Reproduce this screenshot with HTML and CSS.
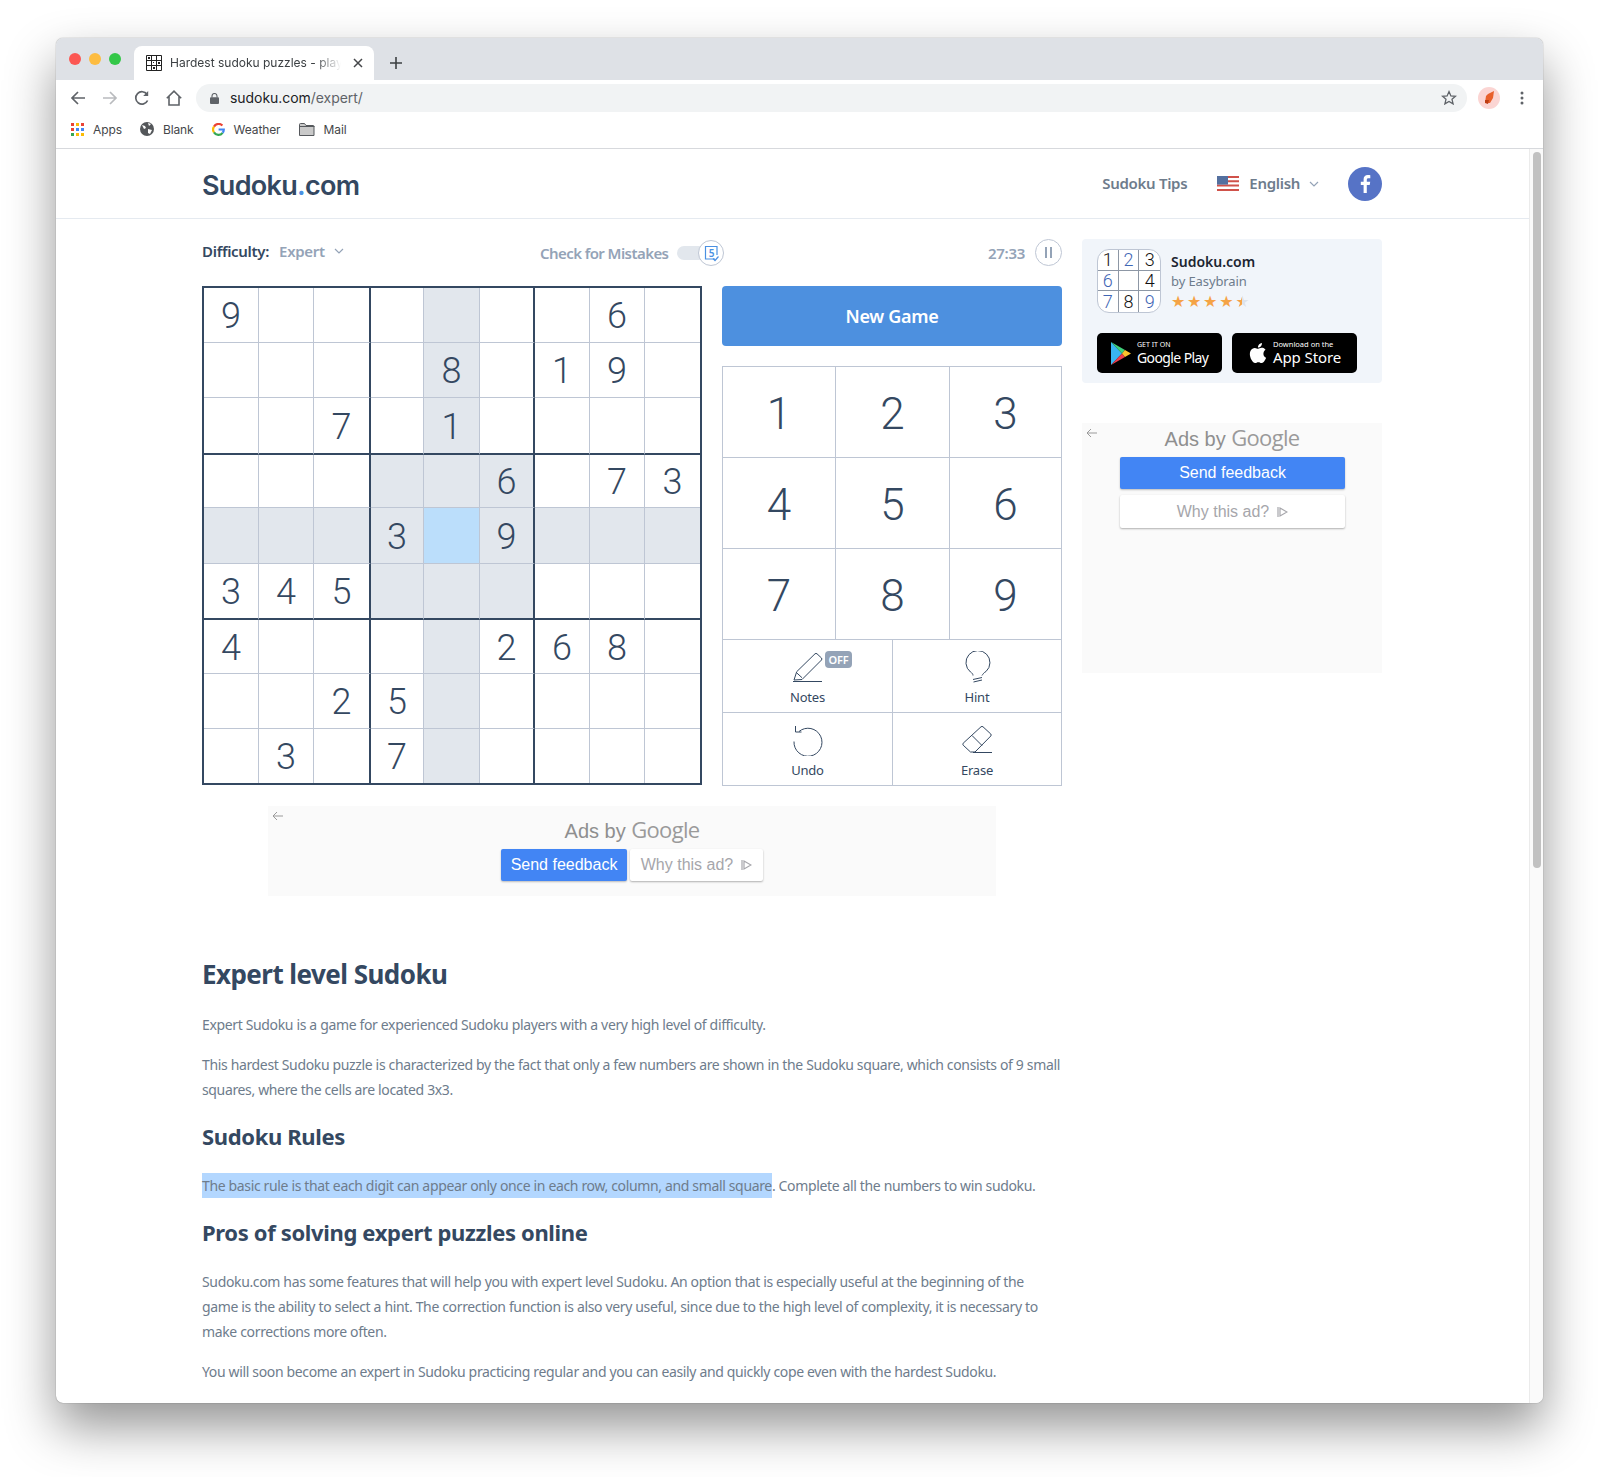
FILE: index.html
```html
<!DOCTYPE html>
<html lang="en">

<head>
    <meta charset="UTF-8">
    <title>Hardest sudoku puzzles - play online</title>
    <link rel="stylesheet" href="styles.css">
</head>

<body>
    <div class="window">
        <!-- browser chrome -->
        <div class="tabstrip">
            <div class="lights">
                <span class="light red"></span>
                <span class="light yellow"></span>
                <span class="light green"></span>
            </div>
            <div class="tab">
                <svg class="favicon" width="16" height="16" viewBox="0 0 16 16" fill="none" stroke="#222" stroke-width="1">
                    <path d="M.5.5h15v15H.5zM5.5.5v15M10.5.5v15M.5 5.5h15M.5 10.5h15" />
                    <path d="M2 2h2v2H2zM12 7h2v2h-2zM7 12h2v2H7zM7 7h1v1H7z" fill="#222" stroke="none" />
                </svg>
                <span class="tab-title">Hardest sudoku puzzles - play online</span>
                <svg class="tab-close" width="10" height="10" viewBox="0 0 10 10" stroke="#45474a" stroke-width="1.5">
                    <path d="M1 1l8 8M9 1l-8 8" />
                </svg>
            </div>
            <svg class="tab-new" width="12" height="12" viewBox="0 0 12 12" stroke="#3c4043" stroke-width="1.6">
                <path d="M6 0v12M0 6h12" />
            </svg>
        </div>

        <div class="toolbar">
            <svg class="nav-icon" width="16" height="16" viewBox="0 0 16 16" fill="none" stroke="#5f6368" stroke-width="1.7">
                <path d="M15 8H2M8 2L2 8l6 6" />
            </svg>
            <svg class="nav-icon" width="16" height="16" viewBox="0 0 16 16" fill="none" stroke="#b9bbbe" stroke-width="1.7">
                <path d="M1 8h13M8 2l6 6-6 6" />
            </svg>
            <svg class="nav-icon" width="16" height="16" viewBox="0 0 16 16" fill="none" stroke="#5f6368" stroke-width="1.7">
                <path d="M13.6 10.5A6.2 6.2 0 1 1 13 4.3" />
                <path d="M14.2 1v5h-5z" fill="#5f6368" stroke="none" />
            </svg>
            <svg class="nav-icon" width="16" height="16" viewBox="0 0 16 16" fill="none" stroke="#5f6368" stroke-width="1.6">
                <path d="M.8 8.2L8 1.2l7.2 7M3 6.5V15h10V6.5" />
            </svg>
            <div class="omnibox">
                <svg width="9" height="11" viewBox="0 0 9 11">
                    <path d="M2 4.5V3a2.5 2.5 0 0 1 5 0v1.5" fill="none" stroke="#5f6368" stroke-width="1.1" />
                    <rect y="4.2" width="9" height="6.8" rx="1" fill="#5f6368" />
                </svg>
                <span class="url">sudoku.com<span class="url-path">/expert/</span></span>
                <svg class="star-btn" width="16" height="16" viewBox="0 0 16 16" fill="none" stroke="#5f6368" stroke-width="1.3">
                    <path d="M8 1.6l1.9 4.3 4.6.4-3.5 3 1.1 4.6L8 11.4l-4.1 2.5L5 9.3l-3.5-3 4.6-.4z" />
                </svg>
            </div>
            <svg class="avatar" width="22" height="22" viewBox="0 0 22 22">
                <circle cx="11" cy="11" r="11" fill="#fbd5d3" />
                <path d="M8 9l2-2 6-3-1 7-3 5-5 0z" fill="#e8602c" />
                <path d="M7 13l4 0-1 4-3-1z" fill="#bd3c12" />
            </svg>
            <svg class="kebab" width="4" height="14" viewBox="0 0 4 14" fill="#5f6368">
                <circle cx="2" cy="2" r="1.5" />
                <circle cx="2" cy="7" r="1.5" />
                <circle cx="2" cy="12" r="1.5" />
            </svg>
        </div>

        <div class="bookmarks">
            <div class="bookmark apps">
                <svg width="13" height="13" viewBox="0 0 13 13">
                    <path d="M0 0h3v3H0z" fill="#ea4335" /><path d="M5 0h3v3H5z" fill="#fbbc05" /><path d="M10 0h3v3h-3z" fill="#ea4335" />
                    <path d="M0 5h3v3H0z" fill="#ea4335" /><path d="M5 5h3v3H5z" fill="#4285f4" /><path d="M10 5h3v3h-3z" fill="#4285f4" />
                    <path d="M0 10h3v3H0z" fill="#34a853" /><path d="M5 10h3v3H5z" fill="#fbbc05" /><path d="M10 10h3v3h-3z" fill="#fbbc05" />
                </svg>
                Apps
            </div>
            <div class="bookmark blank">
                <svg width="14" height="14" viewBox="0 0 14 14">
                    <circle cx="7" cy="7" r="7" fill="#54575a" />
                    <path d="M2 3l3 1 1 2-2 1zM8 1l3 1-2 2zM8 7l4 1-2 4-2-1z" fill="#fff" />
                </svg>
                Blank
            </div>
            <div class="bookmark weather">
                <svg width="13" height="13" viewBox="0 0 13 13" fill="none" stroke-width="2.2">
                    <path d="M10.4 2.6A5.2 5.2 0 0 0 2 3.6" stroke="#ea4335" />
                    <path d="M2 3.6a5.2 5.2 0 0 0 0 5.8" stroke="#fbbc05" />
                    <path d="M2 9.4a5.2 5.2 0 0 0 8.6.4" stroke="#34a853" />
                    <path d="M10.6 9.8a5.2 5.2 0 0 0 1.2-3.3H6.6" stroke="#4285f4" />
                </svg>
                Weather
            </div>
            <div class="bookmark">
                <svg width="16" height="13" viewBox="0 0 16 13">
                    <path d="M.5 12.5V1.5a1 1 0 0 1 1-1h4l1.5 2h7a1 1 0 0 1 1 1v9z" fill="#c9c9c9" stroke="#55585c" />
                    <path d="M.5 3.5h15" stroke="#55585c" />
                </svg>
                Mail
            </div>
        </div>

        <!-- page -->
        <div class="page">
            <div class="page-main">
                <header class="site-header">
                    <div class="logo">Sudoku<span class="logo-dot">.</span>com</div>
                    <nav class="site-nav">
                        <a class="nav-link">Sudoku Tips</a>
                        <div class="lang">
                            <svg width="22" height="15" viewBox="0 0 22 15">
                                <rect width="22" height="15" fill="#fff" />
                                <path d="M0 0h22v2H0zM0 4.3h22v2H0zM0 8.6h22v2H0zM0 13h22v2H0z" fill="#d0524a" />
                                <rect width="11" height="8.6" fill="#54709f" />
                            </svg>
                            <span>English</span>
                            <svg class="chev" width="10" height="6" viewBox="0 0 10 6" fill="none" stroke="#94a3b7" stroke-width="1.2">
                                <path d="M1 1l4 4 4-4" />
                            </svg>
                        </div>
                        <div class="fb">
                            <svg width="34" height="34" viewBox="0 0 34 34">
                                <path d="M18.8 26v-8h2.9l.5-3.3h-3.4v-1.9c0-1 .4-1.6 1.7-1.6h1.8V8.200c-.5-.1-1.400-.2-2.500-.2-2.700 0-4.200 1.600-4.200 4.300v2.400h-2.800V18h2.800v8z" fill="#fff" />
                            </svg>
                        </div>
                    </nav>
                </header>

                <div class="content">
                    <main class="game-col">
                        <div class="game-top">
                            <div class="difficulty">
                                <b>Difficulty:</b>
                                <span>Expert</span>
                                <svg width="10" height="6" viewBox="0 0 10 6" fill="none" stroke="#94a3b7" stroke-width="1.2">
                                    <path d="M1 1l4 4 4-4" />
                                </svg>
                            </div>
                            <div class="mistakes">
                                <span>Check for Mistakes</span>
                                <div class="toggle">
                                    <div class="toggle-knob">
                                        <svg width="18" height="18" viewBox="0 0 18 18" fill="none" stroke="#4a90e2" stroke-width="1.2">
                                            <path d="M13 15H3.5V2.5H15V11" />
                                            <path d="M11 14.5l2 2 3.5-4" />
                                        </svg>
                                        <span class="knob-num">5</span>
                                    </div>
                                </div>
                            </div>
                            <div class="timer">
                                <span>27:33</span>
                                <div class="pause"><i></i><i></i></div>
                            </div>
                        </div>

                        <div class="game">
                            <div class="board">
                                <div class="cell">9</div><div class="cell"></div><div class="cell"></div><div class="cell"></div><div class="cell hl"></div><div class="cell"></div><div class="cell"></div><div class="cell">6</div><div class="cell"></div>
                                <div class="cell"></div><div class="cell"></div><div class="cell"></div><div class="cell"></div><div class="cell hl">8</div><div class="cell"></div><div class="cell">1</div><div class="cell">9</div><div class="cell"></div>
                                <div class="cell"></div><div class="cell"></div><div class="cell">7</div><div class="cell"></div><div class="cell hl">1</div><div class="cell"></div><div class="cell"></div><div class="cell"></div><div class="cell"></div>
                                <div class="cell"></div><div class="cell"></div><div class="cell"></div><div class="cell hl"></div><div class="cell hl"></div><div class="cell hl">6</div><div class="cell"></div><div class="cell">7</div><div class="cell">3</div>
                                <div class="cell hl"></div><div class="cell hl"></div><div class="cell hl"></div><div class="cell hl">3</div><div class="cell sel"></div><div class="cell hl">9</div><div class="cell hl"></div><div class="cell hl"></div><div class="cell hl"></div>
                                <div class="cell">3</div><div class="cell">4</div><div class="cell">5</div><div class="cell hl"></div><div class="cell hl"></div><div class="cell hl"></div><div class="cell"></div><div class="cell"></div><div class="cell"></div>
                                <div class="cell">4</div><div class="cell"></div><div class="cell"></div><div class="cell"></div><div class="cell hl"></div><div class="cell">2</div><div class="cell">6</div><div class="cell">8</div><div class="cell"></div>
                                <div class="cell"></div><div class="cell"></div><div class="cell">2</div><div class="cell">5</div><div class="cell hl"></div><div class="cell"></div><div class="cell"></div><div class="cell"></div><div class="cell"></div>
                                <div class="cell"></div><div class="cell">3</div><div class="cell"></div><div class="cell">7</div><div class="cell hl"></div><div class="cell"></div><div class="cell"></div><div class="cell"></div><div class="cell"></div>
                            </div>

                            <div class="controls">
                                <button class="new-game">New Game</button>
                                <div class="numpad">
                                    <div class="num">1</div><div class="num">2</div><div class="num">3</div>
                                    <div class="num">4</div><div class="num">5</div><div class="num">6</div>
                                    <div class="num">7</div><div class="num">8</div><div class="num">9</div>
                                </div>
                                <div class="actions">
                                    <div class="action">
                                        <span class="action-icon">
                                            <svg width="31" height="31" viewBox="0 0 31 31" fill="none" stroke="#344861" stroke-width="1">
                                                <path d="M2 28l2.7-8.300L23 1.800q1-.8 2 0L29.500 6q.8 1 0 2L10 27.500z" />
                                                <path d="M4.500 20.700l5.500 5M1 29.500h29" />
                                            </svg>
                                            <span class="off">OFF</span>
                                        </span>
                                        Notes
                                    </div>
                                    <div class="action">
                                        <svg width="31" height="32" viewBox="0 0 31 32" fill="none" stroke="#344861" stroke-width="1">
                                            <path d="M11 24.500c0-1.500-1-2.500-2.500-3.500A12 12 0 1 1 24 20.500c-2 1-3 2.500-4 4" />
                                            <path d="M11 28.500l9-2M11.500 31l8.500-2" />
                                        </svg>
                                        Hint
                                    </div>
                                    <div class="action">
                                        <svg width="31" height="31" viewBox="0 0 31 31" fill="none" stroke="#344861" stroke-width="1">
                                            <path d="M7 6.500A14 14 0 1 1 2 16.500" />
                                            <path d="M3.500 1v6h6" />
                                        </svg>
                                        Undo
                                    </div>
                                    <div class="action">
                                        <svg width="31" height="31" viewBox="0 0 31 31" fill="none" stroke="#344861" stroke-width="1">
                                            <path d="M19 1.800q1-.8 2 0l7.800 7.200q.8 1 0 2L13 27H8.500L1.200 20.200q-.8-1 0-2z" />
                                            <path d="M10 10.500l10 10M11 27.500h19" />
                                        </svg>
                                        Erase
                                    </div>
                                </div>
                            </div>
                        </div>

                        <div class="ad ad-wide">
                            <svg class="ad-back" width="11" height="10" viewBox="0 0 11 10" fill="none" stroke="#9a9a9a">
                                <path d="M11 5H1M5 1L1 5l4 4" />
                            </svg>
                            <div class="ad-title">Ads by <span class="ad-google">Google</span></div>
                            <div class="ad-btns">
                                <div class="ad-send">Send feedback</div>
                                <div class="ad-why">Why this ad?
                                    <svg width="11" height="12" viewBox="0 0 11 12" fill="none" stroke="#a6a6ab" stroke-width="1.2">
                                        <path d="M1 1v10M3 2l7 4-7 4z" />
                                    </svg>
                                </div>
                            </div>
                        </div>

                        <section class="article">
                            <h2>Expert level Sudoku</h2>
                            <p class="p-first">Expert Sudoku is a game for experienced Sudoku players with a very high level of difficulty.</p>
                            <p>This hardest Sudoku puzzle is characterized by the fact that only a few numbers are shown in the Sudoku square, which consists of 9 small squares, where the cells are located 3x3.</p>
                            <h3>Sudoku Rules</h3>
                            <p><span class="selected">The basic rule is that each digit can appear only once in each row, column, and small square</span>. Complete all the numbers to win sudoku.</p>
                            <h3>Pros of solving expert puzzles online</h3>
                            <p>Sudoku.com has some features that will help you with expert level Sudoku. An option that is especially useful at the beginning of the game is the ability to select a hint. The correction function is also very useful, since due to the high level of complexity, it is necessary to make corrections more often.</p>
                            <p>You will soon become an expert in Sudoku practicing regular and you can easily and quickly cope even with the hardest Sudoku.</p>
                        </section>
                    </main>

                    <aside class="side-col">
                        <div class="app-box">
                            <div class="app-info">
                                <div class="app-icon">
                                    <span>1</span><span class="blue">2</span><span>3</span>
                                    <span class="blue">6</span><span></span><span>4</span>
                                    <span class="blue">7</span><span>8</span><span class="blue">9</span>
                                </div>
                                <div class="app-text">
                                    <div class="app-name">Sudoku.com</div>
                                    <div class="app-by">by Easybrain</div>
                                    <div class="stars">★★★★<span class="half">★</span></div>
                                </div>
                            </div>
                            <div class="stores">
                                <div class="store">
                                    <svg width="20" height="23" viewBox="0 0 20 23">
                                        <path d="M0 0v23l11-11.500z" fill="#38b6f1" />
                                        <path d="M0 0l14 8-3 3.500z" fill="#3fd07a" />
                                        <path d="M0 23l14-8-3-3.500z" fill="#ee3f4d" />
                                        <path d="M14 8l6 3.500-6 3.500-3-3.500z" fill="#fcc22d" />
                                    </svg>
                                    <div class="store-text">
                                        <small>GET IT ON</small>
                                        <strong>Google Play</strong>
                                    </div>
                                </div>
                                <div class="store store-apple">
                                    <svg width="24" height="26" viewBox="0 0 24 24" fill="#fff">
                                        <path d="M18.71 19.5c-.83 1.24-1.71 2.45-3.05 2.47-1.34.03-1.77-.79-3.29-.79-1.53 0-2 .77-3.27.82-1.31.05-2.3-1.32-3.14-2.53C4.25 17 2.94 12.45 4.7 9.39c.87-1.52 2.43-2.48 4.12-2.51 1.28-.02 2.5.87 3.29.87.78 0 2.26-1.07 3.81-.91.65.03 2.47.26 3.64 1.98-.09.06-2.17 1.28-2.15 3.81.03 3.02 2.65 4.03 2.68 4.04-.03.07-.42 1.44-1.38 2.83M13 3.5c.73-.83 1.94-1.46 2.94-1.5.13 1.17-.34 2.35-1.04 3.19-.69.85-1.83 1.51-2.95 1.42-.15-1.15.41-2.35 1.05-3.11z" />
                                    </svg>
                                    <div class="store-text">
                                        <small class="apple-small">Download on the</small>
                                        <strong class="apple-strong">App Store</strong>
                                    </div>
                                </div>
                            </div>
                        </div>

                        <div class="ad ad-tall">
                            <svg class="ad-back" width="11" height="10" viewBox="0 0 11 10" fill="none" stroke="#9a9a9a">
                                <path d="M11 5H1M5 1L1 5l4 4" />
                            </svg>
                            <div class="ad-title">Ads by <span class="ad-google">Google</span></div>
                            <div class="ad-send">Send feedback</div>
                            <div class="ad-why">Why this ad?
                                <svg width="11" height="12" viewBox="0 0 11 12" fill="none" stroke="#a6a6ab" stroke-width="1.2">
                                    <path d="M1 1v10M3 2l7 4-7 4z" />
                                </svg>
                            </div>
                        </div>
                    </aside>
                </div>
            </div>

            <div class="scrollbar">
                <div class="scroll-thumb"></div>
            </div>
        </div>
    </div>
</body>

</html>
```

FILE: styles.css
```css
html,
body {
    margin: 0;
    padding: 0;
    background-color: #fff;
}

body {
    height: 1477px;
    overflow: hidden;
    font-family: "Noto Sans", Arial, sans-serif;
    color: #344861;
}

/* browser window */
.window {
    display: flex;
    flex-direction: column;
    width: 1487px;
    height: 1365px;
    margin: 38px 0 0 56px;
    background-color: #fff;
    border-radius: 7px;
    overflow: hidden;
    box-shadow: 0 0 1px rgba(0, 0, 0, 0.6), 0 24px 50px rgba(0, 0, 0, 0.42);
}

.tabstrip {
    display: flex;
    align-items: flex-end;
    flex: none;
    height: 42px;
    padding-left: 13px;
    background-color: #dee1e6;
    font-family: Inter, Arial, sans-serif;
}

.lights {
    display: flex;
    gap: 8px;
    width: 65px;
    align-self: flex-start;
    padding-top: 15px;
}

.light {
    width: 12px;
    height: 12px;
    border-radius: 50%;
}

.red { background-color: #fc5753; }
.yellow { background-color: #fdbc40; }
.green { background-color: #33c748; }

.tab {
    display: flex;
    align-items: center;
    width: 240px;
    height: 34px;
    padding-left: 12px;
    box-sizing: border-box;
    background-color: #fff;
    border-radius: 8px 8px 0 0;
}

.favicon {
    flex: none;
}

.tab-title {
    width: 171px;
    margin: -2px 0 0 8px;
    overflow: hidden;
    white-space: nowrap;
    font-size: 12px;
    color: #3c4043;
    -webkit-mask-image: linear-gradient(to right, #000 85%, transparent);
    mask-image: linear-gradient(to right, #000 85%, transparent);
}

.tab-close {
    margin-left: 12px;
}

.tab-new {
    margin: 0 0 11px 16px;
}

.toolbar {
    display: flex;
    align-items: center;
    flex: none;
    height: 36px;
    padding: 0 19px 0 14px;
    font-family: Inter, Arial, sans-serif;
}

.nav-icon {
    flex: none;
    margin-right: 16px;
}

.omnibox {
    display: flex;
    align-items: center;
    flex: 1;
    height: 28px;
    margin-left: -2px;
    padding: 0 10px 0 14px;
    border-radius: 14px;
    background-color: #f1f3f4;
}

.url {
    margin: -2px 0 0 11px;
    font-size: 14px;
    letter-spacing: -0.05px;
    color: #202124;
}

.url-path {
    color: #5f6368;
}

.star-btn {
    margin-left: auto;
}

.avatar {
    flex: none;
    margin-left: 11px;
}

.kebab {
    flex: none;
    margin-left: 20px;
}

.bookmarks {
    display: flex;
    align-items: center;
    gap: 18px;
    flex: none;
    height: 33px;
    padding: 0 0 6px 15px;
    box-sizing: border-box;
    border-bottom: 1px solid #d7d9dd;
    font-family: Inter, Arial, sans-serif;
    font-size: 12px;
    letter-spacing: -0.1px;
    color: #45474a;
}

.bookmark {
    display: flex;
    align-items: center;
    gap: 9px;
}

.page {
    display: flex;
    flex: 1;
    min-height: 0;
}

.page-main {
    flex: 1;
    min-width: 0;
    overflow: hidden;
}

.scrollbar {
    flex: none;
    width: 14px;
    padding: 3px 2px 0 3px;
    box-sizing: border-box;
    background-color: #fafafa;
    border-left: 1px solid #ebebeb;
}

.scroll-thumb {
    height: 716px;
    border-radius: 4px;
    background-color: #c1c1c1;
}

/* site header */
.site-header {
    display: flex;
    align-items: center;
    justify-content: space-between;
    height: 70px;
    padding: 0 147px 0 146px;
    box-sizing: border-box;
    border-bottom: 1px solid #e5eaf0;
}

.logo {
    font-family: Inter, Arial, sans-serif;
    font-size: 27px;
    font-weight: 600;
    letter-spacing: -0.7px;
    color: #344861;
    margin-top: 4px;
}

.logo-dot {
    color: #4a90e2;
}

.site-nav {
    display: flex;
    align-items: center;
    font-size: 15px;
    font-weight: 600;
    letter-spacing: -0.3px;
    color: #6e7c8c;
}

.nav-link {
    margin: -2px 30px 0 0;
}

.lang {
    display: flex;
    align-items: center;
    gap: 10px;
}

.lang span {
    margin-top: -2px;
}

.lang .chev {
    margin-left: -1px;
}

.fb {
    width: 34px;
    height: 34px;
    margin-left: 29px;
    border-radius: 50%;
    background-color: #5673c6;
}

/* main layout */
.content {
    display: flex;
    gap: 20px;
    padding-left: 146px;
}

.game-col {
    width: 860px;
    flex: none;
}

.side-col {
    width: 300px;
    flex: none;
    padding-top: 20px;
}

.game-top {
    display: flex;
    align-items: center;
    height: 67px;
    font-size: 15px;
    font-weight: 600;
    letter-spacing: -0.3px;
    color: #94a3b7;
}

.difficulty {
    display: flex;
    align-items: center;
    gap: 10px;
    width: 338px;
    margin-top: -3px;
}

.difficulty b {
    font-weight: 600;
    color: #344861;
}

.difficulty svg {
    margin-left: -1px;
}

.mistakes {
    display: flex;
    align-items: center;
    gap: 9px;
    width: 321px;
    letter-spacing: -0.58px;
}

.toggle {
    position: relative;
    width: 34px;
    height: 14px;
    border-radius: 7px;
    background-color: #e2e7ed;
}

.toggle-knob {
    position: absolute;
    top: -6px;
    left: 21px;
    display: flex;
    align-items: center;
    justify-content: center;
    width: 26px;
    height: 26px;
    box-sizing: border-box;
    border: 1px solid #bec6d4;
    border-radius: 50%;
    background-color: #fff;
}

.knob-num {
    position: absolute;
    font-size: 10px;
    font-weight: 600;
    color: #4a90e2;
}

.timer {
    display: flex;
    align-items: center;
    justify-content: flex-end;
    gap: 10px;
    flex: 1;
}

.pause {
    display: flex;
    align-items: center;
    justify-content: center;
    gap: 3px;
    width: 27px;
    height: 27px;
    box-sizing: border-box;
    border: 1px solid #bec6d4;
    border-radius: 50%;
}

.pause i {
    width: 2px;
    height: 11px;
    background-color: #94a3b7;
}

.game {
    display: flex;
    gap: 20px;
}

/* board */
.board {
    display: grid;
    grid-template-columns: 55px 55px 57px 53px 56px 55px 55px 55px 55px;
    grid-template-rows: 55px 55px 57px 53px 56px 56px 54px 55px 54px;
    width: 500px;
    height: 499px;
    box-sizing: border-box;
    border: 2px solid #344861;
    font-family: Roboto, Arial, sans-serif;
    font-weight: 300;
    font-size: 36px;
}

.cell {
    display: flex;
    align-items: center;
    justify-content: center;
    padding-top: 2px;
    box-sizing: border-box;
    border-right: 1px solid #bec6d4;
    border-bottom: 1px solid #bec6d4;
}

.cell:nth-child(9n) {
    border-right: none;
}

.cell:nth-child(9n+3),
.cell:nth-child(9n+6) {
    border-right: 2px solid #344861;
}

.cell:nth-child(n+19):nth-child(-n+27),
.cell:nth-child(n+46):nth-child(-n+54) {
    border-bottom: 2px solid #344861;
}

.cell:nth-child(n+73) {
    border-bottom: none;
}

.hl {
    background-color: #e2e7ed;
}

.sel {
    background-color: #bbdefb;
}

/* right of the board */
.controls {
    width: 340px;
    flex: none;
}

.new-game {
    display: block;
    width: 100%;
    height: 60px;
    padding: 0;
    border: none;
    border-radius: 4px;
    background-color: #4d90df;
    color: #fff;
    font-family: inherit;
    font-size: 18px;
    font-weight: 600;
    letter-spacing: -0.3px;
}

.numpad {
    display: grid;
    grid-template-columns: 113px 114px 111px;
    grid-template-rows: 91px 91px 90px;
    height: 273px;
    margin-top: 20px;
    box-sizing: border-box;
    border: 1px solid #bec6d4;
    border-bottom: none;
    font-family: Roboto, Arial, sans-serif;
    font-weight: 300;
    font-size: 44px;
}

.num {
    display: flex;
    align-items: center;
    justify-content: center;
    padding-top: 3px;
    box-sizing: border-box;
    border-right: 1px solid #bec6d4;
    border-bottom: 1px solid #bec6d4;
}

.num:nth-child(3n) {
    border-right: none;
}

.num:nth-child(n+7) {
    border-bottom: none;
}

.actions {
    display: grid;
    grid-template-columns: 170px 168px;
    grid-template-rows: 73px 72px;
    height: 147px;
    box-sizing: border-box;
    border: 1px solid #bec6d4;
    font-size: 13px;
    letter-spacing: -0.2px;
}

.action {
    display: flex;
    flex-direction: column;
    align-items: center;
    justify-content: flex-end;
    gap: 5px;
    padding-bottom: 6px;
    box-sizing: border-box;
    border-right: 1px solid #bec6d4;
    border-bottom: 1px solid #bec6d4;
}

.action:nth-child(2n) {
    border-right: none;
}

.action:nth-child(n+3) {
    border-bottom: none;
}

.action-icon {
    position: relative;
    display: block;
    height: 31px;
}

.off {
    position: absolute;
    top: -1px;
    left: 33px;
    display: flex;
    align-items: center;
    justify-content: center;
    width: 27px;
    height: 17px;
    border-radius: 4px;
    background-color: #94a3b7;
    color: #fff;
    font-size: 11px;
    font-weight: 600;
}

/* ads */
.ad {
    position: relative;
    background-color: #fafafa;
    font-family: "Liberation Sans", Arial, sans-serif;
    text-align: center;
}

.ad-back {
    position: absolute;
    top: 5px;
    left: 4px;
}

.ad-wide {
    width: 728px;
    height: 90px;
    margin: 20px 0 0 66px;
}

.ad-tall {
    height: 250px;
    margin-top: 40px;
    padding-top: 1px;
    box-sizing: border-box;
}

.ad-title {
    height: 33px;
    line-height: 26px;
    font-size: 20px;
    color: #8f8f8f;
}

.ad-wide .ad-title {
    height: 43px;
    line-height: 46px;
}

.ad-google {
    font-family: "Open Sans", Arial, sans-serif;
    font-size: 22px;
    font-weight: 500;
    letter-spacing: -0.7px;
    color: #9a9a9a;
}

.ad-btns {
    display: flex;
    justify-content: center;
    gap: 3px;
}

.ad-send {
    width: 126px;
    height: 32px;
    line-height: 32px;
    border-radius: 2px;
    background-color: #4285f4;
    color: #fff;
    font-size: 16px;
    box-shadow: 0 1px 2px rgba(0, 0, 0, 0.25);
}

.ad-why {
    display: flex;
    align-items: center;
    justify-content: center;
    gap: 8px;
    width: 133px;
    height: 32px;
    border-radius: 2px;
    background-color: #fff;
    color: #a6a6ab;
    font-size: 16px;
    box-shadow: 0 1px 2px rgba(0, 0, 0, 0.3);
}

.ad-tall .ad-send,
.ad-tall .ad-why {
    width: 225px;
    margin-left: 38px;
}

.ad-tall .ad-why {
    height: 33px;
    margin-top: 6px;
}

/* article */
.article {
    margin-top: 60px;
    font-size: 14px;
    line-height: 25px;
    letter-spacing: -0.35px;
    color: #6e7c8c;
}

.article h2 {
    margin: 0;
    font-size: 26px;
    font-weight: 700;
    line-height: 36px;
    letter-spacing: -0.55px;
    color: #344861;
}

.article h3 {
    margin: 0;
    font-size: 22px;
    font-weight: 700;
    line-height: 30px;
    letter-spacing: -0.35px;
    color: #344861;
}

.article p {
    margin: 0 0 15px;
}

.article .p-first {
    margin-top: 20px;
}

.article h3 + p {
    margin-top: 22px;
}

.article p + h3 {
    margin-top: 19px;
}

.selected {
    display: inline-block;
    background-color: #b3d7ff;
}

/* app promo */
.app-box {
    height: 144px;
    padding: 10px 15px;
    box-sizing: border-box;
    border-radius: 4px;
    background-color: #f1f5fa;
}

.app-info {
    display: flex;
    gap: 10px;
}

.app-icon {
    display: grid;
    grid-template-columns: repeat(3, 1fr);
    grid-template-rows: repeat(3, 20.67px);
    width: 64px;
    height: 64px;
    box-sizing: border-box;
    overflow: hidden;
    border: 1px solid #bec6d4;
    border-radius: 12px;
    background-color: #fff;
    font-family: Roboto, Arial, sans-serif;
    font-weight: 300;
    font-size: 18px;
    line-height: 18px;
    color: #111;
}

.app-icon span {
    display: flex;
    align-items: center;
    justify-content: center;
    padding-top: 1px;
    box-sizing: border-box;
    border-right: 1px solid #8d97a5;
    border-bottom: 1px solid #8d97a5;
}

.app-icon span:nth-child(3n) {
    border-right: none;
}

.app-icon span:nth-child(n+7) {
    border-bottom: none;
}

.app-icon .blue {
    color: #3f66b5;
}

.app-name {
    margin-top: 3px;
    font-size: 14px;
    font-weight: 600;
    line-height: 19px;
    color: #1c2531;
}

.app-by {
    font-size: 13px;
    line-height: 20px;
    letter-spacing: -0.1px;
    color: #6e7c8c;
}

.stars {
    font-family: "DejaVu Sans", sans-serif;
    font-size: 16px;
    line-height: 21px;
    letter-spacing: 1.7px;
    color: #f5a345;
}

.half {
    background: linear-gradient(to right, #f5a345 42%, #dde3ec 42%);
    -webkit-background-clip: text;
    background-clip: text;
    color: transparent;
}

.stores {
    display: flex;
    gap: 10px;
    margin-top: 20px;
}

.store {
    display: flex;
    align-items: center;
    gap: 6px;
    width: 125px;
    height: 40px;
    padding-left: 14px;
    box-sizing: border-box;
    border-radius: 5px;
    background-color: #000;
    color: #fff;
}

.store-apple {
    gap: 3px;
}

.store-text {
    display: flex;
    flex-direction: column;
}

.store-text small {
    font-size: 7px;
    line-height: 8px;
}

.store-text strong {
    font-size: 14px;
    font-weight: 400;
    line-height: 17px;
    letter-spacing: -0.6px;
}

.store-text .apple-small {
    font-size: 7.5px;
    line-height: 9px;
}

.store-text .apple-strong {
    font-size: 15px;
    line-height: 17px;
    letter-spacing: -0.1px;
}
```
